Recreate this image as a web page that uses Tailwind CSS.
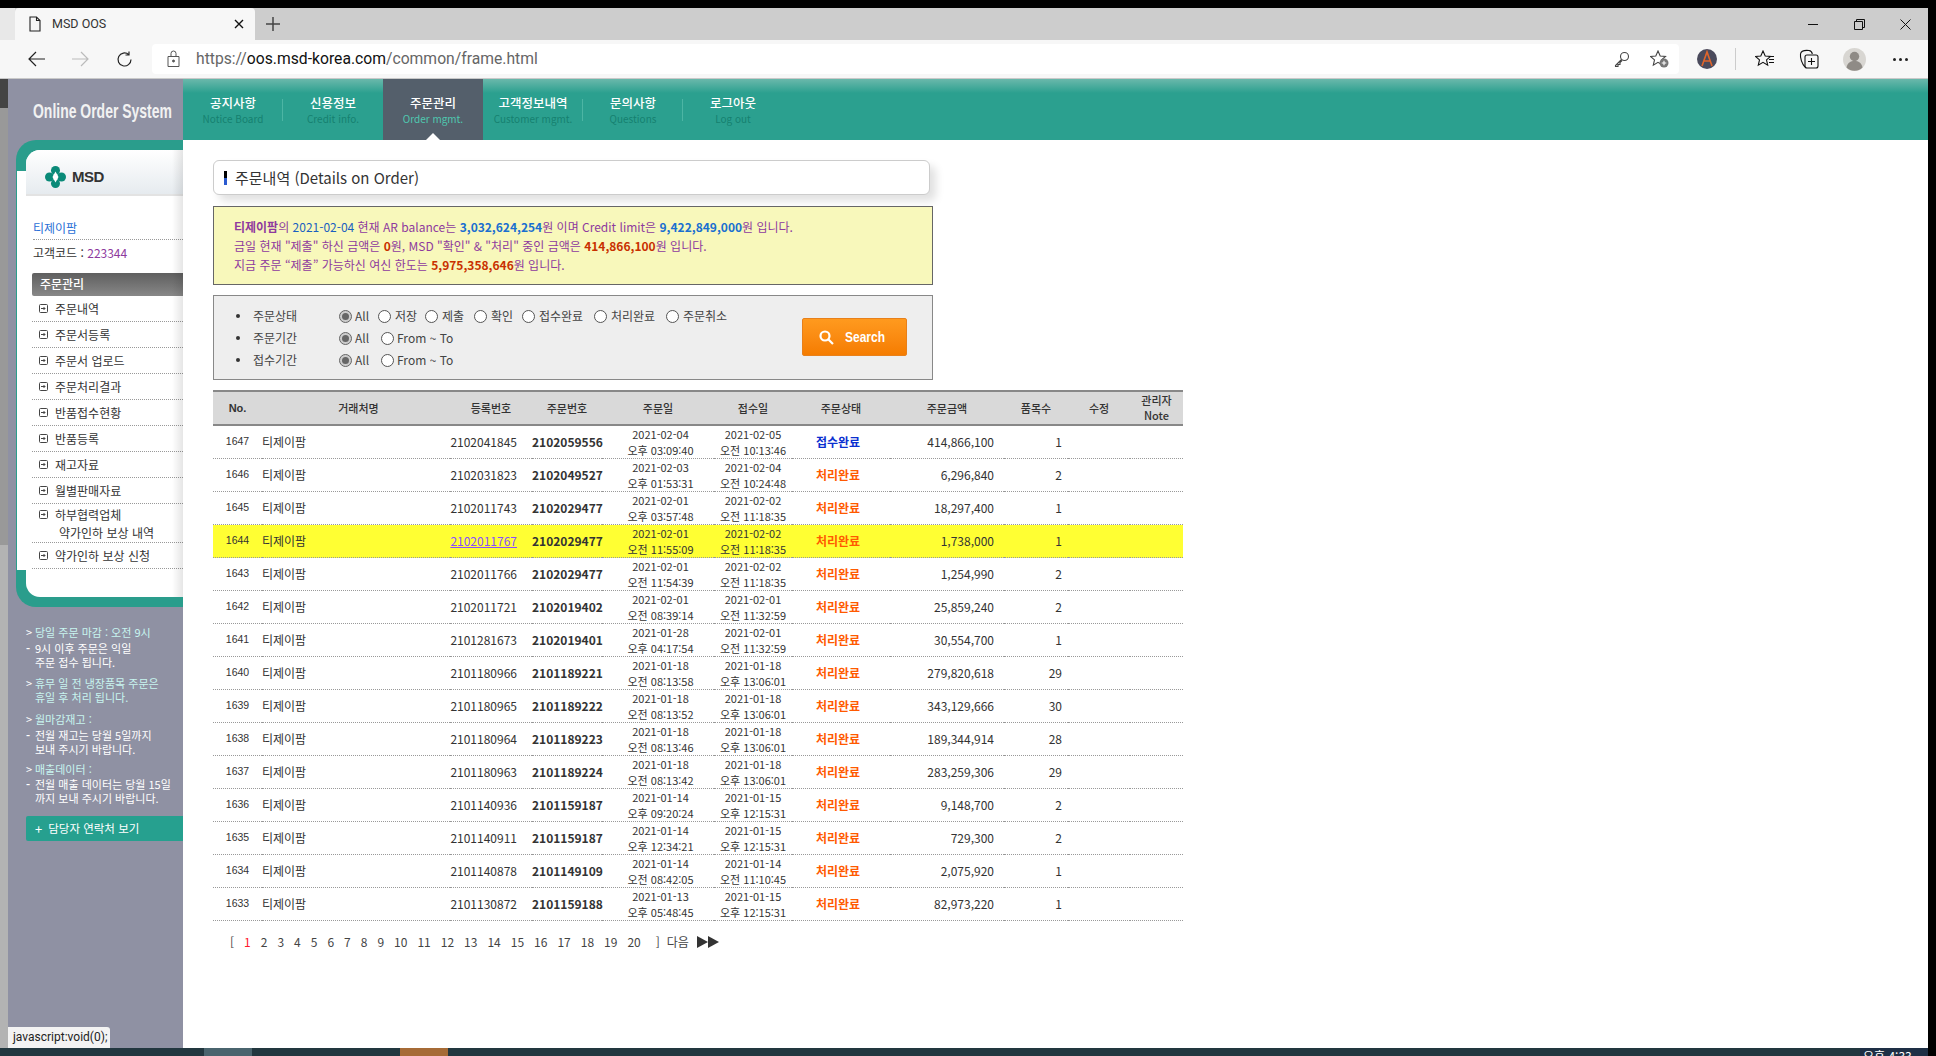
<!DOCTYPE html>
<html lang="ko"><head><meta charset="utf-8"><title>MSD OOS</title>
<script src="https://cdn.jsdelivr.net/npm/@tailwindcss/browser@4"></script></head>
<body class="bg-black">
<div class="relative w-[1936px] h-[1056px] overflow-hidden bg-black flex flex-col pt-[8px] pr-[8px] text-[12px] text-[#333] font-['Noto_Sans_CJK_KR','Noto_Sans',sans-serif]">

<!-- tab strip -->
<div class="h-[32px] shrink-0 bg-[#cdcdcd] flex items-stretch">
  <div class="w-[15px] bg-[#e8e8e8]"></div>
  <div class="w-[240px] bg-[#f7f7f7] rounded-t-[4px] flex items-center pl-[13px] pr-[11px]">
    <svg class="w-[14px] h-[16px]" viewBox="0 0 14 16" fill="none" stroke="#222" stroke-width="1.1"><path d="M2 1h6.500l3.500 3.500v10.500h-10z M8.500 1v3.500h3.500"/></svg>
    <span class="ml-[10px] font-['Roboto'] text-[12.500px] text-[#333] flex-1">MSD OOS</span>
    <svg class="w-[10px] h-[10px]" viewBox="0 0 10 10" stroke="#111" stroke-width="1.400"><path d="M1 1l8 8M9 1l-8 8"/></svg>
  </div>
  <div class="w-[36px] flex items-center justify-center"><svg class="w-[14px] h-[14px]" viewBox="0 0 14 14" stroke="#444" stroke-width="1.500"><path d="M7 0v14M0 7h14"/></svg></div>
  <div class="flex-1"></div>
  <div class="flex items-center text-[#111]">
    <div class="w-[46px] flex justify-center"><svg class="w-[10px] h-[10px]" viewBox="0 0 10 10" stroke="#111" stroke-width="1"><path d="M0 5.500h10"/></svg></div>
    <div class="w-[46px] flex justify-center"><svg class="w-[11px] h-[11px]" viewBox="0 0 11 11" fill="none" stroke="#111" stroke-width="1"><path d="M.5 2.500h8v8h-8zM2.500 2.500v-2h8v8h-2"/></svg></div>
    <div class="w-[46px] flex justify-center"><svg class="w-[11px] h-[11px]" viewBox="0 0 11 11" stroke="#111" stroke-width="1"><path d="M.5.5l10 10M10.500.5l-10 10"/></svg></div>
  </div>
</div>

<!-- toolbar -->
<div class="h-[39px] shrink-0 bg-[#f7f7f7] border-b border-[#c9c9c9] flex items-center relative">
  <div class="w-[8px]"></div>
  <div class="w-[144px] flex items-center pl-[20px] gap-[27px]">
    <svg class="w-[17px] h-[16px]" viewBox="0 0 17 16" fill="none" stroke="#222" stroke-width="1.200"><path d="M17 8H1M8 1L1 8l7 7"/></svg>
    <svg class="w-[17px] h-[16px]" viewBox="0 0 17 16" fill="none" stroke="#bbb" stroke-width="1.200"><path d="M0 8h16M9 1l7 7-7 7"/></svg>
    <svg class="w-[17px] h-[17px]" viewBox="0 0 17 17" fill="none" stroke="#222" stroke-width="1.200"><path d="M15 8.500a6.500 6.500 0 1 1-2.200-4.900M13 .5v3.500H9.500"/></svg>
  </div>
  <div class="w-[1527px] h-[30px] bg-white rounded-[4px] flex items-center pl-[15px] pr-[12px] -mt-[1px]">
    <svg class="w-[13px] h-[17px]" viewBox="0 0 13 17" fill="none" stroke="#555" stroke-width="1"><path d="M1 6.500h11v10H1zM4 6.500V3.500a2.500 2.500 0 0 1 5 0v3"/><circle cx="6.500" cy="11" r="1" fill="#555"/></svg>
    <span class="ml-[16px] font-['Roboto'] text-[15.700px] text-[#666] flex-1">https://<span class="text-[#111]">oos.msd-korea.com</span>/common/frame.html</span>
    <svg class="w-[16px] h-[16px] mr-[20px]" viewBox="0 0 16 16" fill="none" stroke="#444" stroke-width="1.100"><circle cx="10.500" cy="5.500" r="4"/><path d="M7.500 8.500L1.500 14.500v1h2.500v-2h2v-2l2-2"/></svg>
    <svg class="w-[19px] h-[18px] mr-[-2px]" viewBox="0 0 19 18" fill="none" stroke="#444" stroke-width="1.100"><path d="M8 1l2.200 5 5.300.4-4 3.500 1.200 5.300L8 12.400l-4.700 2.800 1.200-5.300-4-3.500 5.300-.4z"/><circle cx="14" cy="13" r="4.500" fill="#777" stroke="none"/><path d="M14 10.700v4.600M11.700 13h4.600" stroke="#fff"/></svg>
  </div>
  <div class="flex-1 flex items-center pl-[17px]">
    <svg class="w-[22px] h-[22px]" viewBox="0 0 22 22"><circle cx="11" cy="11" r="10" fill="#4a4a5c"/><path d="M6 18L11 4l5 14M7.500 13h7" fill="none" stroke="#e0652b" stroke-width="1.600"/></svg>
    <div class="w-[1px] h-[22px] bg-[#ccc] ml-[17px]"></div>
    <svg class="w-[20px] h-[18px] ml-[19px]" viewBox="0 0 20 18" fill="none" stroke="#111" stroke-width="1.100"><path d="M8 1l2.200 5 5.300.4-4 3.500 1.200 5.300L8 12.400l-4.700 2.800 1.200-5.300-4-3.500 5.300-.4z"/><path d="M14 6.500h5M14 9.500h5M14 12.500h5"/></svg>
    <svg class="w-[20px] h-[20px] ml-[24px]" viewBox="0 0 20 20" fill="none" stroke="#111" stroke-width="1.100"><path d="M6 18C3 15 1 9 1.500 5 2 2 5 1 10 1.500c2 .2 3 1.500 3.300 3.500"/><rect x="6" y="6" width="13" height="13" rx="2"/><path d="M12.500 9v7M9 12.500h7"/></svg>
    <svg class="w-[23px] h-[23px] ml-[24px]" viewBox="0 0 23 23"><circle cx="11.500" cy="11.500" r="11.500" fill="#d8d6d2"/><circle cx="11.500" cy="8.500" r="4.700" fill="#8f8b86"/><path d="M3.500 19.500c1-5 4-6.500 8-6.500s7 1.500 8 6.500a11.500 11.500 0 0 1-16 0z" fill="#8f8b86"/></svg>
    <div class="ml-[27px] flex gap-[3px]"><span class="w-[3px] h-[3px] rounded-full bg-[#222]"></span><span class="w-[3px] h-[3px] rounded-full bg-[#222]"></span><span class="w-[3px] h-[3px] rounded-full bg-[#222]"></span></div>
  </div>
</div>

<!-- page -->
<div class="flex-1 flex min-h-0 relative">
  <!-- scrollbar strip -->
  <div class="w-[8px] shrink-0 flex flex-col">
    <div class="h-[29px] bg-[#444]"></div>
    <div class="h-[437px] bg-[#999]"></div>
    <div class="flex-1 bg-[#b3b3b3]"></div>
  </div>

  <!-- sidebar -->
  <aside class="w-[175px] shrink-0 bg-[#8f91a3] flex flex-col">
    <div class="h-[61px] flex items-center justify-center pl-[13px] pt-[3px] overflow-visible">
      <span class="inline-block font-['Liberation_Sans'] font-bold text-[21px] text-[#f2f2f2] whitespace-nowrap scale-x-[0.665]">Online Order System</span>
    </div>
    <div class="relative ml-[8px] w-[167px] h-[467px] bg-[#2a9d8c] rounded-l-[20px] pl-[10px] pt-[10px] pb-[10px]">
      <div class="absolute left-[1px] top-[31px] w-[12px] h-[399px] bg-white"></div>
      <div class="relative h-full bg-white rounded-l-[14px] overflow-hidden flex flex-col">
        <div class="h-[46px] shrink-0 bg-gradient-to-b from-white to-[#e6ebef] border-b-2 border-[#e3e3e3] flex items-center pl-[19px] pt-[10px] gap-[6px]">
          <svg class="w-[21px] h-[22px]" viewBox="0 0 21 22"><circle cx="10.500" cy="4.500" r="4.500" fill="#0a8a78"/><circle cx="10.500" cy="17.500" r="4.500" fill="#0a8a78"/><circle cx="4.500" cy="11" r="4.500" fill="#0a8a78"/><circle cx="16.500" cy="11" r="4.500" fill="#0a8a78"/><path d="M10.500 5.500l3 5.500-3 5.500-3-5.500z" fill="#fff"/></svg>
          <span class="font-['Liberation_Sans'] font-bold text-[15px] tracking-[-0.5px] text-[#333]">MSD</span>
        </div>
        <div class="pl-[7px] pt-[24px] pb-[5px] text-[#2a6fd6] h-[45px] flex items-start"><div class="w-full border-b border-dotted border-[#999] pb-[2px] h-[21px] leading-[17px] -mt-[1px]">티제이팜</div></div>
        <div class="pl-[7px] h-[22px] leading-[20px] mt-[2px]">고객코드 : <span class="text-[#8e3a9e]">223344</span></div>
        <div class="ml-[6px] mt-[8px] h-[23px] bg-gradient-to-b from-[#5f5f5f] to-[#888] rounded-l-[2px] text-white font-medium pl-[8px] leading-[22px]">주문관리</div>
        <ul class="ml-[6px] leading-[17px]">
          <li class="h-[26px] border-b border-dotted border-[#999] flex items-center pl-[7px] gap-[7px]"><svg class="w-[9px] h-[9px]" viewBox="0 0 9 9" fill="none" stroke="#444"><rect x=".5" y=".5" width="8" height="8" rx="1"/><path d="M2 4.500h4M4.500 3l1.500 1.500L4.500 6"/></svg>주문내역</li>
          <li class="h-[26px] border-b border-dotted border-[#999] flex items-center pl-[7px] gap-[7px]"><svg class="w-[9px] h-[9px]" viewBox="0 0 9 9" fill="none" stroke="#444"><rect x=".5" y=".5" width="8" height="8" rx="1"/><path d="M2 4.500h4M4.500 3l1.500 1.500L4.500 6"/></svg>주문서등록</li>
          <li class="h-[26px] border-b border-dotted border-[#999] flex items-center pl-[7px] gap-[7px]"><svg class="w-[9px] h-[9px]" viewBox="0 0 9 9" fill="none" stroke="#444"><rect x=".5" y=".5" width="8" height="8" rx="1"/><path d="M2 4.500h4M4.500 3l1.500 1.500L4.500 6"/></svg>주문서 업로드</li>
          <li class="h-[26px] border-b border-dotted border-[#999] flex items-center pl-[7px] gap-[7px]"><svg class="w-[9px] h-[9px]" viewBox="0 0 9 9" fill="none" stroke="#444"><rect x=".5" y=".5" width="8" height="8" rx="1"/><path d="M2 4.500h4M4.500 3l1.500 1.500L4.500 6"/></svg>주문처리결과</li>
          <li class="h-[26px] border-b border-dotted border-[#999] flex items-center pl-[7px] gap-[7px]"><svg class="w-[9px] h-[9px]" viewBox="0 0 9 9" fill="none" stroke="#444"><rect x=".5" y=".5" width="8" height="8" rx="1"/><path d="M2 4.500h4M4.500 3l1.500 1.500L4.500 6"/></svg>반품접수현황</li>
          <li class="h-[26px] border-b border-dotted border-[#999] flex items-center pl-[7px] gap-[7px]"><svg class="w-[9px] h-[9px]" viewBox="0 0 9 9" fill="none" stroke="#444"><rect x=".5" y=".5" width="8" height="8" rx="1"/><path d="M2 4.500h4M4.500 3l1.500 1.500L4.500 6"/></svg>반품등록</li>
          <li class="h-[26px] border-b border-dotted border-[#999] flex items-center pl-[7px] gap-[7px]"><svg class="w-[9px] h-[9px]" viewBox="0 0 9 9" fill="none" stroke="#444"><rect x=".5" y=".5" width="8" height="8" rx="1"/><path d="M2 4.500h4M4.500 3l1.500 1.500L4.500 6"/></svg>재고자료</li>
          <li class="h-[26px] border-b border-dotted border-[#999] flex items-center pl-[7px] gap-[7px]"><svg class="w-[9px] h-[9px]" viewBox="0 0 9 9" fill="none" stroke="#444"><rect x=".5" y=".5" width="8" height="8" rx="1"/><path d="M2 4.500h4M4.500 3l1.500 1.500L4.500 6"/></svg>월별판매자료</li>
          <li class="h-[39px] border-b border-dotted border-[#999] pl-[7px] pt-[2px]"><div class="flex items-center gap-[7px] h-[17px]"><svg class="w-[9px] h-[9px]" viewBox="0 0 9 9" fill="none" stroke="#444"><rect x=".5" y=".5" width="8" height="8" rx="1"/><path d="M2 4.500h4M4.500 3l1.500 1.500L4.500 6"/></svg>하부협력업체</div><div class="pl-[20px] h-[19px] leading-[19px] whitespace-nowrap">약가인하 보상 내역</div></li>
          <li class="h-[26px] border-b border-dotted border-[#999] flex items-center pl-[7px] gap-[7px]"><svg class="w-[9px] h-[9px]" viewBox="0 0 9 9" fill="none" stroke="#444"><rect x=".5" y=".5" width="8" height="8" rx="1"/><path d="M2 4.500h4M4.500 3l1.500 1.500L4.500 6"/></svg>약가인하 보상 신청</li>
        </ul>
        <div class="absolute right-0 top-0 bottom-0 w-[11px] bg-gradient-to-r from-transparent to-black/10"></div>
      </div>
    </div>

    <div class="pl-[18px] pt-[18px] text-[11px] leading-[14px] text-white flex flex-col whitespace-nowrap">
      <div class="flex text-[#c8f5f0]"><span class="w-[9px] shrink-0 text-white">&gt;</span>당일 주문 마감 : 오전 9시</div>
      <div class="flex mt-[2px]"><span class="w-[9px] shrink-0 font-bold">-</span><div>9시 이후 주문은 익일<br>주문 접수 됩니다.</div></div>
      <div class="flex mt-[7px] text-[#c8f5f0]"><span class="w-[9px] shrink-0 text-white">&gt;</span><div>휴무 일 전 냉장품목 주문은<br>휴일 후 처리 됩니다.</div></div>
      <div class="flex mt-[8px] text-[#c8f5f0]"><span class="w-[9px] shrink-0 text-white">&gt;</span>월마감재고 :</div>
      <div class="flex mt-[2px]"><span class="w-[9px] shrink-0 font-bold">-</span><div>전월 재고는 당월 5일까지<br>보내 주시기 바랍니다.</div></div>
      <div class="flex mt-[6px] text-[#c8f5f0]"><span class="w-[9px] shrink-0 text-white">&gt;</span>매출데이터 :</div>
      <div class="flex mt-[1px]"><span class="w-[9px] shrink-0 font-bold">-</span><div>전월 매출 데이터는 당월 15일<br>까지 보내 주시기 바랍니다.</div></div>
    </div>
    <div class="ml-[18px] mt-[11px] h-[25px] bg-[#26a08f] rounded-l-[2px] text-white text-[11.500px] flex items-center pl-[9px] gap-[6px]"><span class="text-[13px]">+</span>담당자 연락처 보기</div>
  </aside>

  <!-- main -->
  <main class="flex-1 bg-white flex flex-col min-w-0">
    <nav class="h-[61px] shrink-0 bg-[linear-gradient(#6ab8ab,#2ba08f_14px)] flex">
      <a class="relative w-[100px] flex flex-col items-center pt-[14px]"><span class="text-white text-[12.500px] font-medium leading-[19px]">공지사항</span><span class="text-[#16806f] text-[10px] leading-[14px]">Notice Board</span><span class="absolute right-0 top-[20px] h-[22px] w-px bg-[#4db5a4]"></span></a>
      <a class="relative w-[100px] flex flex-col items-center pt-[14px]"><span class="text-white text-[12.500px] font-medium leading-[19px]">신용정보</span><span class="text-[#16806f] text-[10px] leading-[14px]">Credit info.</span></a>
      <a class="relative w-[100px] flex flex-col items-center pt-[14px] bg-[#545f6b]"><span class="text-white text-[12.500px] font-medium leading-[19px]">주문관리</span><span class="text-[#4fc9b0] text-[10px] leading-[14px]">Order mgmt.</span><span class="absolute bottom-0 left-[43px] w-0 h-0 border-x-[7px] border-x-transparent border-b-[7px] border-b-white"></span></a>
      <a class="relative w-[100px] flex flex-col items-center pt-[14px]"><span class="text-white text-[12.500px] font-medium leading-[19px]">고객정보내역</span><span class="text-[#16806f] text-[10px] leading-[14px]">Customer mgmt.</span><span class="absolute right-0 top-[20px] h-[22px] w-px bg-[#4db5a4]"></span></a>
      <a class="relative w-[100px] flex flex-col items-center pt-[14px]"><span class="text-white text-[12.500px] font-medium leading-[19px]">문의사항</span><span class="text-[#16806f] text-[10px] leading-[14px]">Questions</span><span class="absolute right-0 top-[20px] h-[22px] w-px bg-[#4db5a4]"></span></a>
      <a class="relative w-[100px] flex flex-col items-center pt-[14px]"><span class="text-white text-[12.500px] font-medium leading-[19px]">로그아웃</span><span class="text-[#16806f] text-[10px] leading-[14px]">Log out</span></a>
    </nav>

    <div class="pl-[30px] flex flex-col items-start">
      <div class="mt-[20px] w-[717px] h-[35px] bg-white border border-[#ccc] rounded-[6px] shadow-[6px_6px_8px_rgba(0,0,0,0.12)] flex items-center pl-[10px]">
        <span class="w-[3px] h-[14px] bg-gradient-to-b from-black from-50% to-[#2b5bd0] to-50%"></span>
        <span class="ml-[8px] text-[15px] leading-none text-[#333] -mt-[1px]">주문내역 (Details on Order)</span>
      </div>

      <div class="mt-[11px] w-[720px] h-[79px] bg-[#f8f8bb] border border-[#666] pl-[20px] pt-[10px] leading-[19px] text-[#8e3a9e] whitespace-nowrap">
        <div><b>티제이팜</b>의 <span class="text-[#1a5fc0]">2021-02-04</span> 현재 AR balance는 <b class="text-[#1a6fd0]">3,032,624,254</b>원 이며 Credit limit은 <b class="text-[#1a6fd0]">9,422,849,000</b>원 입니다.</div>
        <div>금일 현재 "제출" 하신 금액은 <b class="text-[#c83000]">0</b>원, MSD "확인" &amp; "처리" 중인 금액은 <b class="text-[#c83000]">414,866,100</b>원 입니다.</div>
        <div>지금 주문 “제출” 가능하신 여신 한도는 <b class="text-[#c83000]">5,975,358,646</b>원 입니다.</div>
      </div>

      <div class="mt-[10px] w-[720px] h-[85px] bg-[#eeeeee] border border-[#888] relative pt-[9px] pl-[22px] text-[#444]">
        <div class="h-[22px] flex items-center">
          <span class="w-[4px] h-[4px] rounded-full bg-[#333]"></span><span class="w-[86px] ml-[13px]">주문상태</span>
          <span class="flex items-center gap-[3px] w-[39px]"><span class="w-[13px] h-[13px] rounded-full border border-[#666] bg-[#ccc] flex items-center justify-center"><span class="w-[7px] h-[7px] rounded-full bg-[#666]"></span></span>All</span>
          <span class="flex items-center gap-[4px] w-[47px]"><span class="w-[13px] h-[13px] rounded-full border border-[#555] bg-white"></span>저장</span>
          <span class="flex items-center gap-[4px] w-[49px]"><span class="w-[13px] h-[13px] rounded-full border border-[#555] bg-white"></span>제출</span>
          <span class="flex items-center gap-[4px] w-[48px]"><span class="w-[13px] h-[13px] rounded-full border border-[#555] bg-white"></span>확인</span>
          <span class="flex items-center gap-[4px] w-[72px]"><span class="w-[13px] h-[13px] rounded-full border border-[#555] bg-white"></span>접수완료</span>
          <span class="flex items-center gap-[4px] w-[72px]"><span class="w-[13px] h-[13px] rounded-full border border-[#555] bg-white"></span>처리완료</span>
          <span class="flex items-center gap-[4px]"><span class="w-[13px] h-[13px] rounded-full border border-[#555] bg-white"></span>주문취소</span>
        </div>
        <div class="h-[22px] flex items-center">
          <span class="w-[4px] h-[4px] rounded-full bg-[#333]"></span><span class="w-[86px] ml-[13px]">주문기간</span>
          <span class="flex items-center gap-[3px] w-[42px]"><span class="w-[13px] h-[13px] rounded-full border border-[#666] bg-[#ccc] flex items-center justify-center"><span class="w-[7px] h-[7px] rounded-full bg-[#666]"></span></span>All</span>
          <span class="flex items-center gap-[3px]"><span class="w-[13px] h-[13px] rounded-full border border-[#555] bg-white"></span>From ~ To</span>
        </div>
        <div class="h-[22px] flex items-center">
          <span class="w-[4px] h-[4px] rounded-full bg-[#333]"></span><span class="w-[86px] ml-[13px]">접수기간</span>
          <span class="flex items-center gap-[3px] w-[42px]"><span class="w-[13px] h-[13px] rounded-full border border-[#666] bg-[#ccc] flex items-center justify-center"><span class="w-[7px] h-[7px] rounded-full bg-[#666]"></span></span>All</span>
          <span class="flex items-center gap-[3px]"><span class="w-[13px] h-[13px] rounded-full border border-[#555] bg-white"></span>From ~ To</span>
        </div>
        <button class="absolute left-[588px] top-[22px] w-[105px] h-[38px] bg-gradient-to-b from-[#ff9a1e] to-[#f57c00] border border-[#e8801a] rounded-[2px] flex items-center justify-center gap-[6px] text-white font-bold font-['Liberation_Sans'] text-[15px]">
          <svg class="w-[15px] h-[15px]" viewBox="0 0 15 15" fill="none" stroke="#fff" stroke-width="2.200"><circle cx="6" cy="6" r="4.500"/><path d="M9.500 9.500L14 14"/></svg><span class="inline-block scale-x-[0.8]">Search</span>
        </button>
      </div>

      <table class="mt-[10px] w-[970px] table-fixed border-separate border-spacing-0 text-[12px] leading-[16px] [&_td]:border-b [&_td]:border-dotted [&_td]:border-[#999] [&_th]:border-y-2 [&_th]:border-[#888] [&_th]:bg-[#d9d9d9] [&_th]:text-[11px]">
        <colgroup><col class="w-[49px]"><col class="w-[188px]"><col class="w-[82px]"><col class="w-[70px]"><col class="w-[112px]"><col class="w-[78px]"><col class="w-[98px]"><col class="w-[114px]"><col class="w-[64px]"><col class="w-[62px]"><col class="w-[53px]"></colgroup>
        <thead><tr class="h-[36px] text-[#333]">
          <th class="font-bold font-['Liberation_Sans']">No.</th><th class="font-medium pl-[5px]">거래처명</th><th class="font-medium">등록번호</th><th class="font-medium">주문번호</th><th class="font-medium">주문일</th><th class="font-medium">접수일</th><th class="font-medium">주문상태</th><th class="font-medium">주문금액</th><th class="font-medium">품목수</th><th class="font-medium">수정</th><th class="font-medium leading-[15px]">관리자<br>Note</th>
        </tr></thead>
        <tbody>
          <tr class="h-[33px]"><td class="text-center font-['Liberation_Sans'] text-[10.500px] pb-[3px]">1647</td><td>티제이팜</td><td class="text-right pr-[15px] whitespace-nowrap">2102041845</td><td class="text-center font-bold whitespace-nowrap">2102059556</td><td class="text-center pl-[5px] text-[11px]">2021-02-04<br>오후 03:09:40</td><td class="text-center whitespace-nowrap text-[11px]">2021-02-05<br>오전 10:13:46</td><td class="pl-[24px] font-bold text-[#0a2fd0]">접수완료</td><td class="text-right pr-[10px]">414,866,100</td><td class="text-right pr-[6px]">1</td><td></td><td></td></tr>
          <tr class="h-[33px]"><td class="text-center font-['Liberation_Sans'] text-[10.500px] pb-[3px]">1646</td><td>티제이팜</td><td class="text-right pr-[15px] whitespace-nowrap">2102031823</td><td class="text-center font-bold whitespace-nowrap">2102049527</td><td class="text-center pl-[5px] text-[11px]">2021-02-03<br>오후 01:53:31</td><td class="text-center whitespace-nowrap text-[11px]">2021-02-04<br>오전 10:24:48</td><td class="pl-[24px] font-bold text-[#ff5a00]">처리완료</td><td class="text-right pr-[10px]">6,296,840</td><td class="text-right pr-[6px]">2</td><td></td><td></td></tr>
          <tr class="h-[33px]"><td class="text-center font-['Liberation_Sans'] text-[10.500px] pb-[3px]">1645</td><td>티제이팜</td><td class="text-right pr-[15px] whitespace-nowrap">2102011743</td><td class="text-center font-bold whitespace-nowrap">2102029477</td><td class="text-center pl-[5px] text-[11px]">2021-02-01<br>오후 03:57:48</td><td class="text-center whitespace-nowrap text-[11px]">2021-02-02<br>오전 11:18:35</td><td class="pl-[24px] font-bold text-[#ff5a00]">처리완료</td><td class="text-right pr-[10px]">18,297,400</td><td class="text-right pr-[6px]">1</td><td></td><td></td></tr>
          <tr class="h-[33px] bg-[#ffff33]"><td class="text-center font-['Liberation_Sans'] text-[10.500px] pb-[3px]">1644</td><td>티제이팜</td><td class="text-right pr-[15px] whitespace-nowrap"><a class="underline text-[#8a4fff]">2102011767</a></td><td class="text-center font-bold whitespace-nowrap">2102029477</td><td class="text-center pl-[5px] text-[11px]">2021-02-01<br>오전 11:55:09</td><td class="text-center whitespace-nowrap text-[11px]">2021-02-02<br>오전 11:18:35</td><td class="pl-[24px] font-bold text-[#ff5a00]">처리완료</td><td class="text-right pr-[10px]">1,738,000</td><td class="text-right pr-[6px]">1</td><td></td><td></td></tr>
          <tr class="h-[33px]"><td class="text-center font-['Liberation_Sans'] text-[10.500px] pb-[3px]">1643</td><td>티제이팜</td><td class="text-right pr-[15px] whitespace-nowrap">2102011766</td><td class="text-center font-bold whitespace-nowrap">2102029477</td><td class="text-center pl-[5px] text-[11px]">2021-02-01<br>오전 11:54:39</td><td class="text-center whitespace-nowrap text-[11px]">2021-02-02<br>오전 11:18:35</td><td class="pl-[24px] font-bold text-[#ff5a00]">처리완료</td><td class="text-right pr-[10px]">1,254,990</td><td class="text-right pr-[6px]">2</td><td></td><td></td></tr>
          <tr class="h-[33px]"><td class="text-center font-['Liberation_Sans'] text-[10.500px] pb-[3px]">1642</td><td>티제이팜</td><td class="text-right pr-[15px] whitespace-nowrap">2102011721</td><td class="text-center font-bold whitespace-nowrap">2102019402</td><td class="text-center pl-[5px] text-[11px]">2021-02-01<br>오전 08:39:14</td><td class="text-center whitespace-nowrap text-[11px]">2021-02-01<br>오전 11:32:59</td><td class="pl-[24px] font-bold text-[#ff5a00]">처리완료</td><td class="text-right pr-[10px]">25,859,240</td><td class="text-right pr-[6px]">2</td><td></td><td></td></tr>
          <tr class="h-[33px]"><td class="text-center font-['Liberation_Sans'] text-[10.500px] pb-[3px]">1641</td><td>티제이팜</td><td class="text-right pr-[15px] whitespace-nowrap">2101281673</td><td class="text-center font-bold whitespace-nowrap">2102019401</td><td class="text-center pl-[5px] text-[11px]">2021-01-28<br>오후 04:17:54</td><td class="text-center whitespace-nowrap text-[11px]">2021-02-01<br>오전 11:32:59</td><td class="pl-[24px] font-bold text-[#ff5a00]">처리완료</td><td class="text-right pr-[10px]">30,554,700</td><td class="text-right pr-[6px]">1</td><td></td><td></td></tr>
          <tr class="h-[33px]"><td class="text-center font-['Liberation_Sans'] text-[10.500px] pb-[3px]">1640</td><td>티제이팜</td><td class="text-right pr-[15px] whitespace-nowrap">2101180966</td><td class="text-center font-bold whitespace-nowrap">2101189221</td><td class="text-center pl-[5px] text-[11px]">2021-01-18<br>오전 08:13:58</td><td class="text-center whitespace-nowrap text-[11px]">2021-01-18<br>오후 13:06:01</td><td class="pl-[24px] font-bold text-[#ff5a00]">처리완료</td><td class="text-right pr-[10px]">279,820,618</td><td class="text-right pr-[6px]">29</td><td></td><td></td></tr>
          <tr class="h-[33px]"><td class="text-center font-['Liberation_Sans'] text-[10.500px] pb-[3px]">1639</td><td>티제이팜</td><td class="text-right pr-[15px] whitespace-nowrap">2101180965</td><td class="text-center font-bold whitespace-nowrap">2101189222</td><td class="text-center pl-[5px] text-[11px]">2021-01-18<br>오전 08:13:52</td><td class="text-center whitespace-nowrap text-[11px]">2021-01-18<br>오후 13:06:01</td><td class="pl-[24px] font-bold text-[#ff5a00]">처리완료</td><td class="text-right pr-[10px]">343,129,666</td><td class="text-right pr-[6px]">30</td><td></td><td></td></tr>
          <tr class="h-[33px]"><td class="text-center font-['Liberation_Sans'] text-[10.500px] pb-[3px]">1638</td><td>티제이팜</td><td class="text-right pr-[15px] whitespace-nowrap">2101180964</td><td class="text-center font-bold whitespace-nowrap">2101189223</td><td class="text-center pl-[5px] text-[11px]">2021-01-18<br>오전 08:13:46</td><td class="text-center whitespace-nowrap text-[11px]">2021-01-18<br>오후 13:06:01</td><td class="pl-[24px] font-bold text-[#ff5a00]">처리완료</td><td class="text-right pr-[10px]">189,344,914</td><td class="text-right pr-[6px]">28</td><td></td><td></td></tr>
          <tr class="h-[33px]"><td class="text-center font-['Liberation_Sans'] text-[10.500px] pb-[3px]">1637</td><td>티제이팜</td><td class="text-right pr-[15px] whitespace-nowrap">2101180963</td><td class="text-center font-bold whitespace-nowrap">2101189224</td><td class="text-center pl-[5px] text-[11px]">2021-01-18<br>오전 08:13:42</td><td class="text-center whitespace-nowrap text-[11px]">2021-01-18<br>오후 13:06:01</td><td class="pl-[24px] font-bold text-[#ff5a00]">처리완료</td><td class="text-right pr-[10px]">283,259,306</td><td class="text-right pr-[6px]">29</td><td></td><td></td></tr>
          <tr class="h-[33px]"><td class="text-center font-['Liberation_Sans'] text-[10.500px] pb-[3px]">1636</td><td>티제이팜</td><td class="text-right pr-[15px] whitespace-nowrap">2101140936</td><td class="text-center font-bold whitespace-nowrap">2101159187</td><td class="text-center pl-[5px] text-[11px]">2021-01-14<br>오후 09:20:24</td><td class="text-center whitespace-nowrap text-[11px]">2021-01-15<br>오후 12:15:31</td><td class="pl-[24px] font-bold text-[#ff5a00]">처리완료</td><td class="text-right pr-[10px]">9,148,700</td><td class="text-right pr-[6px]">2</td><td></td><td></td></tr>
          <tr class="h-[33px]"><td class="text-center font-['Liberation_Sans'] text-[10.500px] pb-[3px]">1635</td><td>티제이팜</td><td class="text-right pr-[15px] whitespace-nowrap">2101140911</td><td class="text-center font-bold whitespace-nowrap">2101159187</td><td class="text-center pl-[5px] text-[11px]">2021-01-14<br>오후 12:34:21</td><td class="text-center whitespace-nowrap text-[11px]">2021-01-15<br>오후 12:15:31</td><td class="pl-[24px] font-bold text-[#ff5a00]">처리완료</td><td class="text-right pr-[10px]">729,300</td><td class="text-right pr-[6px]">2</td><td></td><td></td></tr>
          <tr class="h-[33px]"><td class="text-center font-['Liberation_Sans'] text-[10.500px] pb-[3px]">1634</td><td>티제이팜</td><td class="text-right pr-[15px] whitespace-nowrap">2101140878</td><td class="text-center font-bold whitespace-nowrap">2101149109</td><td class="text-center pl-[5px] text-[11px]">2021-01-14<br>오전 08:42:05</td><td class="text-center whitespace-nowrap text-[11px]">2021-01-14<br>오전 11:10:45</td><td class="pl-[24px] font-bold text-[#ff5a00]">처리완료</td><td class="text-right pr-[10px]">2,075,920</td><td class="text-right pr-[6px]">1</td><td></td><td></td></tr>
          <tr class="h-[33px]"><td class="text-center font-['Liberation_Sans'] text-[10.500px] pb-[3px]">1633</td><td>티제이팜</td><td class="text-right pr-[15px] whitespace-nowrap">2101130872</td><td class="text-center font-bold whitespace-nowrap">2101159188</td><td class="text-center pl-[5px] text-[11px]">2021-01-13<br>오후 05:48:45</td><td class="text-center whitespace-nowrap text-[11px]">2021-01-15<br>오후 12:15:31</td><td class="pl-[24px] font-bold text-[#ff5a00]">처리완료</td><td class="text-right pr-[10px]">82,973,220</td><td class="text-right pr-[6px]">1</td><td></td><td></td></tr>
        </tbody>
      </table>

      <div class="mt-[12px] ml-[17px] h-[18px] flex items-center gap-[10px] text-[#444] leading-none">
        <span>[</span><span class="text-[#ff1a2e]">1</span><span>2</span><span>3</span><span>4</span><span>5</span><span>6</span><span>7</span><span>8</span><span>9</span><span>10</span><span>11</span><span>12</span><span>13</span><span>14</span><span>15</span><span>16</span><span>17</span><span>18</span><span>19</span><span>20</span><span class="ml-[5px] -mr-[3px]">]</span><span>다음</span>
        <span class="flex -ml-[2px]"><span class="w-0 h-0 border-y-[6px] border-y-transparent border-l-[11px] border-l-[#333]"></span><span class="w-0 h-0 border-y-[6px] border-y-transparent border-l-[11px] border-l-[#333]"></span></span>
      </div>
    </div>
  </main>

  <div class="absolute left-[8px] bottom-0 w-[102px] h-[21px] bg-[#f3f3f3] rounded-tr-[3px] pl-[5px] font-['Roboto'] text-[12px] leading-[21px] text-[#222]">javascript:void(0);</div>
</div>

<!-- taskbar -->
<div class="h-[8px] shrink-0 bg-[#22373f] flex overflow-hidden">
  <div class="w-[204px]"></div><div class="w-[48px] bg-[#4a646e]"></div><div class="w-[148px]"></div><div class="w-[48px] bg-[#a66b36]"></div>
  <div class="flex-1"></div>
  <div class="w-[68px] bg-[#1e2f45] pl-[3px] text-white text-[12px] leading-[16px] whitespace-nowrap">오후 4:33</div>
</div>
</div>
</body></html>
